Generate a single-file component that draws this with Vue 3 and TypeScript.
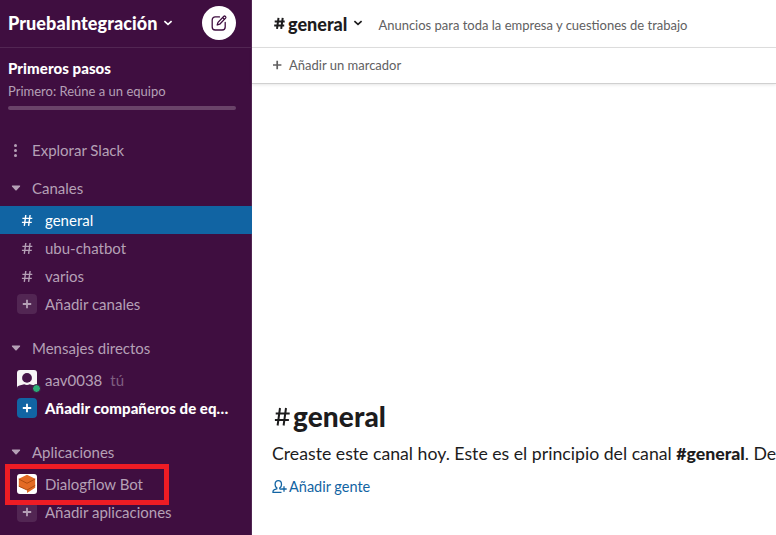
<script setup lang="ts">
interface Row {
  label: string
  icon: 'hash' | 'plus' | 'avatar' | 'bot'
  note?: string
  active?: boolean
  strong?: boolean
  marked?: boolean
}

interface Section {
  title: string
  rows: Row[]
}

const sections: Section[] = [
  {
    title: 'Canales',
    rows: [
      { label: 'general', icon: 'hash', active: true },
      { label: 'ubu-chatbot', icon: 'hash' },
      { label: 'varios', icon: 'hash' },
      { label: 'Añadir canales', icon: 'plus' },
    ],
  },
  {
    title: 'Mensajes directos',
    rows: [
      { label: 'aav0038', icon: 'avatar', note: 'tú' },
      { label: 'Añadir compañeros de eq…', icon: 'plus', strong: true },
    ],
  },
  {
    title: 'Aplicaciones',
    rows: [
      { label: 'Dialogflow Bot', icon: 'bot', marked: true },
      { label: 'Añadir aplicaciones', icon: 'plus' },
    ],
  },
]
</script>

<template>
  <div class="app">
    <aside class="sidebar">
      <header class="team">
        <span class="team-name">PruebaIntegración</span>
        <svg class="chevron" width="10" height="8" viewBox="0 0 10 8">
          <path d="M1.4 2.2 5 5.4 8.6 2.2" fill="none" stroke="currentColor" stroke-width="1.7" />
        </svg>
        <button class="compose" aria-label="Mensaje nuevo">
          <svg width="18" height="18" viewBox="0 0 18 18" fill="none" stroke="currentColor" stroke-width="1.3" stroke-linecap="round" stroke-linejoin="round">
            <path d="M9.5 2.9H5.2A3 3 0 0 0 2.2 5.9V13a3 3 0 0 0 3 3h7a3 3 0 0 0 3-3V8.5" />
            <path d="M7.2 11 8 8.4 13.9 2.3q.7-.6 1.5.1.9.9.2 1.7L9.7 10.2Z" />
            <path d="m12.7 3.6 1.7 1.7" />
          </svg>
        </button>
      </header>

      <div class="steps">
        <div class="steps-title">Primeros pasos</div>
        <div class="steps-sub">Primero: Reúne a un equipo</div>
        <div class="steps-bar"></div>
      </div>

      <nav class="nav">
        <div class="head">
          <span class="head-icon dots"><i></i><i></i><i></i></span>
          <span class="text">Explorar Slack</span>
        </div>

        <section v-for="s in sections" :key="s.title" class="section">
          <div class="head">
            <span class="head-icon">
              <svg width="10" height="6" viewBox="0 0 10 6"><path d="M1.3.6h7.4q.8.2.3.9L5.6 5.3q-.6.6-1.2 0L1 1.5Q.5.8 1.3.6Z" fill="currentColor" /></svg>
            </span>
            <span class="text">{{ s.title }}</span>
          </div>
          <div class="rows">
            <div v-for="r in s.rows" :key="r.label" class="row" :class="{ active: r.active, strong: r.strong }">
              <span class="icon" :class="r.icon">
                <svg v-if="r.icon === 'hash'" width="12" height="14" viewBox="0 0 12 14" fill="none" stroke="currentColor" stroke-width="1.4">
                  <path d="M4.8 2 3.3 12.8M9.1 2 7.6 12.8M1.4 5.4h9.9M.9 9.4h9.9" />
                </svg>
                <svg v-else-if="r.icon === 'plus'" width="10" height="10" viewBox="0 0 10 10">
                  <path d="M5 .8v8.4M.8 5h8.4" stroke="currentColor" stroke-width="1.8" />
                </svg>
                <svg v-else-if="r.icon === 'avatar'" width="20" height="20" viewBox="0 0 20 20">
                  <path d="M3 0h14a3 3 0 0 1 3 3v17H0V3a3 3 0 0 1 3-3Z" fill="#f6f4f6" />
                  <circle cx="10" cy="7.9" r="4.9" fill="#451449" />
                  <path d="M0 20v-2.2q0-1.7 2.5-2.3l4.7-1.2q2.8 1.4 5.6 0l4.7 1.2q2.5.6 2.5 2.3V20Z" fill="#451449" />
                </svg>
                <svg v-else width="20" height="20" viewBox="0 0 20 20">
                  <rect width="20" height="20" rx="3" fill="#fff" />
                  <path d="M10 .7 18.2 4.7v9L10 19v-2.9L1.8 12.6V4.7Z" fill="#e36b25" />
                  <path d="M1.8 5 10 9.3 18.2 5M1.8 12.2 10 16l8.2-4.6" fill="none" stroke="#a9480f" stroke-width=".9" />
                </svg>
                <span v-if="r.icon === 'avatar'" class="presence"></span>
              </span>
              <span class="text">{{ r.label }}</span>
              <span v-if="r.note" class="note">{{ r.note }}</span>
              <span v-if="r.marked" class="mark"></span>
            </div>
          </div>
        </section>
      </nav>
    </aside>

    <main class="main">
      <header class="channel">
        <svg class="channel-hash" width="12" height="14" viewBox="0 0 12 14" fill="none" stroke="currentColor" stroke-width="2">
          <path d="M4.5 1.9 3 12.9M8.7 1.9 7.2 12.9M.7 5.4h10M.2 9.5h10" />
        </svg>
        <span class="channel-name">general</span>
        <svg class="chevron" width="10" height="8" viewBox="0 0 10 8">
          <path d="M1.4 2.2 5 5.4 8.6 2.2" fill="none" stroke="currentColor" stroke-width="1.7" />
        </svg>
        <span class="topic">Anuncios para toda la empresa y cuestiones de trabajo</span>
      </header>
      <div class="bookmarks">
        <svg width="10" height="10" viewBox="0 0 10 10">
          <path d="M5.2 .8v8.4M1 5h8.4" stroke="currentColor" stroke-width="1.7" />
        </svg>
        <span>Añadir un marcador</span>
      </div>
      <div class="intro">
        <h1>
          <svg width="18" height="20" viewBox="0 0 18 20" fill="none" stroke="currentColor" stroke-width="2">
            <path d="M8 2 5.6 19.5M14 2 11.6 19.5M3.7 7.5h14M2.9 14h14" />
          </svg>
          <span>general</span>
        </h1>
        <p>Creaste este canal hoy. Este es el principio del canal <b>#general</b>. De</p>
        <a class="invite">
          <svg width="16" height="16" viewBox="0 0 16 16" fill="none" stroke="currentColor" stroke-width="1.3">
            <path d="M9.5 13.4H1v-.9q0-1.4 1.5-1.9l2.3-.8V8.9C3.7 8.1 3.1 6.9 3.1 5.4c0-2.3 1.2-3.7 3.2-3.7s3.2 1.4 3.2 3.7c0 1.5-.6 2.7-1.7 3.5v.9l1.5.5M12 7.3v5.4M9.3 10h5.4" />
          </svg>
          <span>Añadir gente</span>
        </a>
      </div>
    </main>
  </div>
</template>

<style>
body {
  margin: 0;
  overflow: hidden;
}
</style>

<style scoped>
.app {
  display: flex;
  width: 776px;
  height: 535px;
  overflow: hidden;
  font-family: Lato, "Liberation Sans", sans-serif;
  font-size: 15px;
  color: #1d1c1d;
  background: #fff;
}
.app * {
  box-sizing: border-box;
}
svg {
  display: block;
  flex: none;
}
.sidebar {
  flex: none;
  width: 252px;
  height: 535px;
  background: #3f0e40;
  border-right: 1px solid #522653;
  color: #b5a0b6;
}
.team {
  display: flex;
  align-items: center;
  height: 48px;
  padding: 0 15px 2px 8px;
  border-bottom: 1px solid #522653;
  color: #fff;
}
.team-name {
  font-size: 18px;
  font-weight: 900;
  line-height: 24px;
  letter-spacing: 0.07px;
}
.team .chevron {
  margin-left: 6px;
}
.compose {
  display: grid;
  place-items: center;
  width: 34px;
  height: 34px;
  margin-left: auto;
  padding: 0;
  border: 0;
  border-radius: 50%;
  background: #fff;
  color: #3f0e40;
}
.steps {
  height: 88px;
  padding: 9px 15px 0 8px;
}
.steps-title {
  color: #fff;
  font-weight: 900;
  line-height: 22px;
  letter-spacing: 0.07px;
}
.steps-sub {
  padding-top: 1px;
  font-size: 13px;
  line-height: 22px;
}
.steps-bar {
  height: 4px;
  margin-top: 4px;
  border-radius: 2px;
  background: #6a4369;
}
.head {
  display: flex;
  align-items: center;
  height: 28px;
  padding-left: 8px;
}
.head-icon {
  display: flex;
  justify-content: center;
  width: 16px;
  margin-right: 8px;
}
.dots {
  flex-direction: column;
  align-items: center;
  gap: 2px;
  padding-right: 2px;
}
.dots i {
  width: 3px;
  height: 3px;
  border-radius: 50%;
  background: currentColor;
}
.section {
  padding-top: 10px;
}
.section + .section {
  padding-top: 16px;
}
.rows {
  padding-top: 4px;
}
.text {
  line-height: 28px;
  white-space: nowrap;
}
.row {
  position: relative;
  display: flex;
  align-items: center;
  height: 28px;
  margin-right: -1px;
  padding: 0 0 0 17px;
}
.icon {
  position: relative;
  display: grid;
  flex: none;
  place-items: center;
  width: 20px;
  height: 20px;
  margin-right: 8px;
  border-radius: 4px;
}
.plus {
  background: #522653;
}
.active {
  background: #1164a3;
  color: #fff;
}
.strong {
  color: #fff;
  font-weight: 900;
  letter-spacing: 0.05px;
}
.strong .plus {
  background: #1164a3;
}
.presence {
  position: absolute;
  right: -4px;
  bottom: -3px;
  width: 9px;
  height: 9px;
  border: 1px solid #3f0e40;
  border-radius: 50%;
  background: #2bac76;
}
.note {
  margin-left: 8px;
  color: #7f5f80;
}
.mark {
  position: absolute;
  left: 5px;
  top: -6px;
  z-index: 1;
  width: 164px;
  height: 41px;
  border: 5px solid #ed1c24;
}
.main {
  flex: 1;
  min-width: 0;
  display: flex;
  flex-direction: column;
}
.channel {
  display: flex;
  align-items: center;
  height: 48px;
  padding: 0 0 1px 22px;
  border-bottom: 1px solid #e0e0e0;
  white-space: nowrap;
}
.channel-name {
  margin-left: 2px;
  padding-top: 1px;
  font-size: 18px;
  font-weight: 900;
  line-height: 24px;
}
.channel .chevron {
  margin-left: 6px;
}
.topic {
  margin: 4px 0 0 15px;
  font-size: 13px;
  color: #616061;
}
.bookmarks {
  display: flex;
  align-items: center;
  gap: 7px;
  height: 36px;
  padding: 0 0 2px 20px;
  border-bottom: 1px solid #d0d0d0;
  box-shadow: 0 1px 3px rgba(0, 0, 0, 0.1);
  font-size: 13px;
  color: #616061;
}
.intro {
  margin-top: auto;
  padding: 0 0 38px 20px;
  white-space: nowrap;
}
h1 {
  display: flex;
  align-items: center;
  gap: 3px;
  margin: 0;
  font-size: 28px;
  font-weight: 900;
  line-height: 34px;
  letter-spacing: 0.1px;
}
p {
  margin: 8px 0 0;
  font-size: 17.69px;
  line-height: 26px;
}
b {
  font-weight: 900;
}
.invite {
  display: flex;
  align-items: center;
  gap: 1px;
  margin-top: 10px;
  font-size: 14.5px;
  line-height: 20px;
  color: #1264a3;
}
</style>
